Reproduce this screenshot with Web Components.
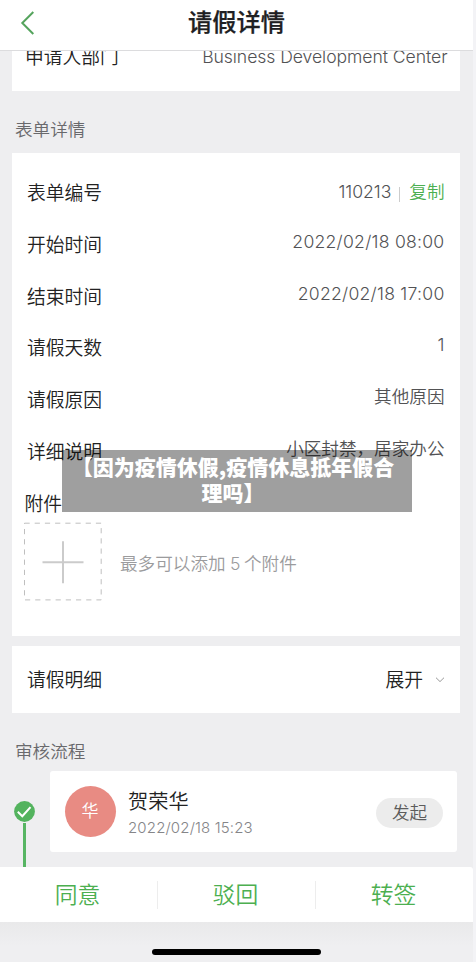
<!DOCTYPE html>
<html lang="zh-CN"><head><meta charset="utf-8"><title>请假详情</title>
<style>
html,body{margin:0;height:100%;overflow:hidden}
body{background:#f3f3f6;font-family:Inter,"Noto Sans CJK SC",sans-serif;color:#2a2a2a}
</style></head><body>
<leave-page></leave-page>
<script>
function define(name, html){
  customElements.define(name, class extends HTMLElement{
    constructor(){
      super();
      this.attachShadow({mode:'open'}).innerHTML = html;
    }
  });
}
define('nav-header', `<style>
:host{display:grid;grid-template-columns:60px 1fr 60px;align-items:center;height:50px;background:#fff;border-bottom:1px solid #dcdcde;flex:none;box-sizing:content-box}
svg{display:block;margin-left:20px;margin-top:-5px}
h1{margin:0;font-size:24.2px;line-height:34px;font-weight:500;color:#202022;text-align:center;padding-bottom:4px;-webkit-text-stroke:.25px #202022}
</style><svg width="16" height="24" viewBox="0 0 16 24"><path d="M13.3 1 2.3 12l11 11" fill="none" stroke="#55a45d" stroke-width="2"/></svg><h1><slot></slot></h1>`);
define('form-row', `<style>
:host{display:flex;justify-content:space-between;align-items:flex-start;height:51.8px;padding:0 15.5px 0 15px;white-space:nowrap;line-height:30px}
.k{font-size:18.8px;font-weight:350;color:#222;transform:translateX(var(--kx,0))}
.v{font-size:17.6px;font-weight:350;color:#525254;margin-top:var(--vy,-4px);letter-spacing:var(--ls,0)}
</style><span class="k"><slot name="label"></slot></span><span class="v"><slot></slot></span>`);
define('copy-value', `<style>
:host{display:flex;align-items:center}
i{width:1px;height:15px;background:#ccc;margin:4px 9px 0 8px}
b{font-weight:350;color:#4caf50}
.n{letter-spacing:-.05px}
</style><span class="n"><slot></slot></span><i></i><b>复制</b>`);
define('section-title', `<style>
:host{display:flex;align-items:center;padding-left:15px;font-size:17.6px;font-weight:350;line-height:26px;color:#69696c;height:var(--h);box-sizing:border-box;flex:none}
</style><span><slot></slot></span>`);
define('form-card', `<style>
:host{display:block;margin:0 13px 0 12px;background:#fff;overflow:hidden;box-sizing:border-box;flex:none;height:var(--h);padding-top:var(--pt,0)}
</style><slot></slot>`);
define('attachment-picker', `<style>
:host{display:flex;align-items:center;margin:4px 0 0 12px;font-size:17.6px;font-weight:350;color:#9b9b9d;gap:18px}
svg{display:block}span{padding-top:2px}
.num{margin:0 3.6px 0 4.4px}
</style><svg width="78" height="79" viewBox="0 0 78 79"><rect x=".5" y="1.2" width="76.7" height="76.7" fill="none" stroke="#bfbfbf" stroke-dasharray="5.2 5"/><path d="M18.5 40.3h41M39 19.3v42" stroke="#cbcbcb" stroke-width="2"/></svg><span>最多可以添加<span class="num">5</span>个附件</span>`);
define('expand-row', `<style>
:host{display:flex;align-items:center;height:65px;padding:0 15px;font-size:18.8px;font-weight:350;color:#222}
.t{flex:1}svg{margin:2px 0 0 12px}
</style><span class="t"><slot></slot></span><span>展开</span><svg width="10" height="6" viewBox="0 0 10 6"><path d="M1 .7 5 4.6 9 .7" fill="none" stroke="#999" stroke-width="1"/></svg>`);
define('flow-step', `<style>
:host{display:grid;grid-template-columns:50px 407px;height:96px;flex:none}
.rail{display:flex;flex-direction:column;align-items:center;padding:30px 1px 0 0}
.rail svg{display:block}.line{width:3px;flex:1;background:#57b563;margin-top:1px}
.card{height:81px;border-radius:3px;background:#fff;display:flex;align-items:center;padding:0 14px 0 14.5px;box-sizing:border-box}
.av{width:51px;height:51px;border-radius:50%;background:#e88b83;color:#fff;font-size:17px;display:flex;align-items:center;justify-content:center;flex:none;font-weight:350;line-height:24px;box-sizing:border-box;padding-bottom:1px}
.info{flex:1;padding:3px 0 0 12.5px}
.name{font-size:20.2px;font-weight:350;line-height:28px;color:#222}
.date{font-size:15px;font-weight:350;line-height:22px;letter-spacing:.15px;color:#858588;margin-top:1px}
.tag{width:67px;height:30px;border-radius:15px;background:#ececec;color:#5c5c5c;font-size:17.6px;line-height:30px;text-align:center;font-weight:350;margin-top:2px}
</style><div class="rail"><svg width="21" height="21" viewBox="0 0 21 21"><circle cx="10.5" cy="10.5" r="10.4" fill="#53b35e"/><path d="m3.8 10.8 4.5 4.4 8.2-9" fill="none" stroke="#fff" stroke-width="2"/></svg><div class="line"></div></div>
<div class="card"><div class="av">华</div><div class="info"><div class="name"><slot></slot></div><div class="date">2022/02/18 15:23</div></div><div class="tag">发起</div></div>`);
define('action-bar', `<style>
:host{display:grid;grid-template-columns:157px 158px 158px;align-items:center;height:55px;background:#fff;flex:none;border-radius:0 3px 0 0;font-size:22.8px;font-weight:350;color:#4caf50;text-align:center;line-height:28px}
span{box-sizing:border-box;padding-right:2px}
span+span{border-left:1px solid #ededed}
</style><span>同意</span><span>驳回</span><span>转签</span>`);
define('caption-overlay', `<style>
:host{position:absolute;left:62px;top:450px;width:350px;height:62px;box-sizing:border-box;padding:3px 8px 0 0;background:rgba(0,0,0,.375);color:#fff;font:900 21px/26px "Noto Sans CJK SC",sans-serif;text-align:center}
</style><slot></slot>`);
define('leave-page', `<style>
:host{display:flex;flex-direction:column;position:relative;width:473px;height:962px;background:#eeeef0;overflow:hidden}
main{display:flex;flex-direction:column;height:816px;flex:none;overflow:hidden}
footer{flex:1;background:linear-gradient(#e9e9ea,#efeff1 60%);display:flex;justify-content:center}
footer i{width:169px;height:6px;border-radius:3px;background:#000;margin-top:27px}
.gap{height:10px;flex:none}
.dept{margin-right:-3px;letter-spacing:-.06px}
</style>
<nav-header>请假详情</nav-header>
<main>
<form-card style="--h:40px"><form-row style="margin-top:-8px;--kx:-2px;--vy:-1px"><span slot="label">申请人部门</span><span class="dept">Business Development Center</span></form-row></form-card>
<section-title style="--h:62px;padding-top:15px">表单详情</section-title>
<form-card style="--h:483px;--pt:26px">
<form-row style="--vy:-2px"><span slot="label">表单编号</span><copy-value>110213</copy-value></form-row>
<form-row style="--ls:.25px"><span slot="label">开始时间</span>2022/02/18 08:00</form-row>
<form-row style="--ls:.25px"><span slot="label">结束时间</span>2022/02/18 17:00</form-row>
<form-row><span slot="label">请假天数</span>1</form-row>
<form-row><span slot="label">请假原因</span>其他原因</form-row>
<form-row><span slot="label">详细说明</span>小区封禁，居家办公</form-row>
<form-row style="height:28px;--kx:-2.5px"><span slot="label">附件</span></form-row>
<attachment-picker></attachment-picker>
</form-card>
<div class="gap"></div>
<form-card style="--h:67px"><expand-row>请假明细</expand-row></form-card>
<section-title style="--h:58px;padding-top:20px">审核流程</section-title>
<flow-step>贺荣华</flow-step>
</main>
<action-bar></action-bar>
<footer><i></i></footer>
<caption-overlay>【因为疫情休假,疫情休息抵年假合理吗】</caption-overlay>`);
</script>
</body></html>
